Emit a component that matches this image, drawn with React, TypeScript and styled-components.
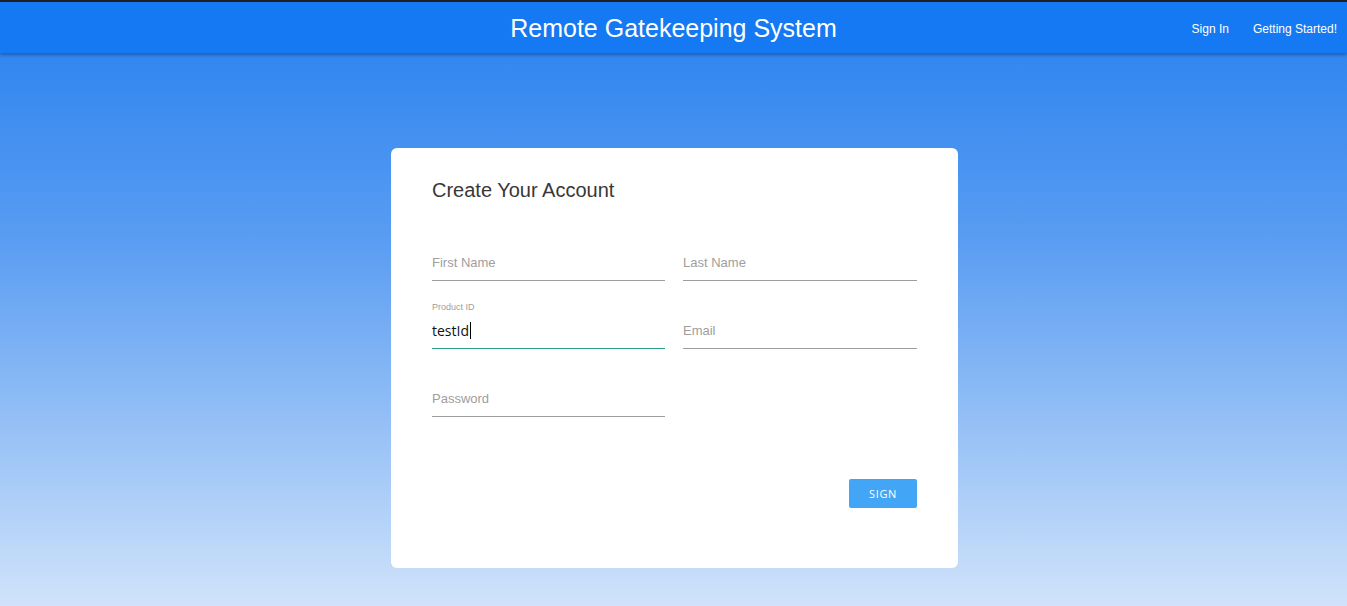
import styled, { createGlobalStyle } from "styled-components";

const GlobalStyle = createGlobalStyle`
  html, body {
    margin: 0;
    padding: 0;
  }
  body {
    min-height: 606px;
    font-family: "Liberation Sans", Arial, sans-serif;
    background: linear-gradient(180deg, #2680ef 0%, #5a9df2 40%, #d0e3fa 100%);
  }
`;

export default function App() {
  return (
    <Page>
      <GlobalStyle />
      <Header>
        <span />
        <Brand>Remote Gatekeeping System</Brand>
        <Nav>
          <NavLink>Sign In</NavLink>
          <NavLink>Getting Started!</NavLink>
        </Nav>
      </Header>
      <Card>
        <Title>Create Your Account</Title>
        <Grid>
          <Field>
            <Input placeholder="First Name" />
          </Field>
          <Field>
            <Input placeholder="Last Name" />
          </Field>
          <Field>
            <FloatLabel>Product ID</FloatLabel>
            <Filled>
              testId
              <Caret />
            </Filled>
          </Field>
          <Field>
            <Input placeholder="Email" />
          </Field>
          <Field>
            <Input type="password" placeholder="Password" />
          </Field>
        </Grid>
        <Actions>
          <SignButton>SIGN</SignButton>
        </Actions>
      </Card>
    </Page>
  );
}

const Page = styled.div`
  min-height: 606px;
  display: flex;
  flex-direction: column;
  align-items: center;
`;

const Header = styled.header`
  width: 100%;
  box-sizing: border-box;
  height: 53px;
  border-top: 2px solid #1d1f24;
  background-color: #1479f2;
  box-shadow: 0 2px 3px rgba(0, 0, 0, 0.3);
  display: grid;
  grid-template-columns: 1fr auto 1fr;
  align-items: center;
`;

const Brand = styled.div`
  color: #fff;
  font-size: 25px;
  padding-top: 2px;
`;

const Nav = styled.nav`
  display: flex;
  justify-content: flex-end;
  gap: 24px;
  padding-right: 10px;
  padding-top: 2px;
`;

const NavLink = styled.a`
  color: #fff;
  font-size: 12px;
  cursor: pointer;
`;

const Card = styled.div`
  margin: 95px 0 0 2px;
  width: 567px;
  box-sizing: border-box;
  padding: 30px 41px 60px;
  background-color: #fff;
  border-radius: 6px;
`;

const Title = styled.h2`
  margin: 0 0 12px;
  font-size: 20px;
  line-height: 24px;
  font-weight: 400;
  color: #383838;
`;

const Grid = styled.div`
  display: grid;
  grid-template-columns: 233px 234px;
  grid-auto-rows: 68px;
  column-gap: 18px;
`;

const Field = styled.div`
  display: flex;
  flex-direction: column;
  justify-content: flex-end;
  padding-bottom: 1px;
`;

const Input = styled.input`
  height: 36px;
  padding: 0;
  border: none;
  border-bottom: 1px solid #9e9e9e;
  outline: none;
  background: transparent;
  font-family: "Liberation Sans", Arial, sans-serif;
  font-size: 13px;
  color: #333;
  &::placeholder {
    color: #9e9e9e;
  }
`;

const FloatLabel = styled.label`
  font-size: 9px;
  line-height: 12px;
  color: #9e9e9e;
`;

const Filled = styled.div`
  height: 35px;
  display: flex;
  align-items: center;
  border-bottom: 1px solid #2a9d8f;
  font-family: "Open Sans", "Liberation Sans", sans-serif;
  font-size: 14px;
  color: #111;
`;

const Caret = styled.span`
  display: inline-block;
  width: 1px;
  height: 17px;
  margin-left: 1px;
  background: #000;
`;

const Actions = styled.div`
  margin-top: 61px;
  display: flex;
  justify-content: flex-end;
`;

const SignButton = styled.button`
  width: 68px;
  height: 29px;
  border: none;
  border-radius: 2px;
  background-color: #42a5f5;
  color: #fff;
  font-family: "Open Sans", "Liberation Sans", sans-serif;
  font-size: 11px;
  letter-spacing: 0.6px;
  cursor: pointer;
`;
